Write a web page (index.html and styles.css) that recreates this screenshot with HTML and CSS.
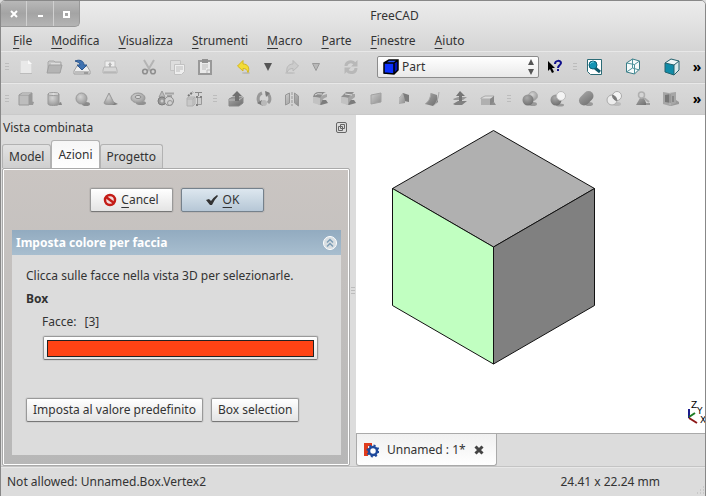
FILE: index.html
```html
<!DOCTYPE html>
<html lang="it">
<head>
<meta charset="utf-8">
<title>FreeCAD</title>
<link rel="stylesheet" href="styles.css">
</head>
<body>
<svg class="defs" aria-hidden="true">
  <defs>
    <linearGradient id="metal" x1="0" y1="0" x2="1" y2="1"><stop offset="0" stop-color="#ccc"/><stop offset="1" stop-color="#8e8e8e"/></linearGradient>
    <linearGradient id="dark" x1="0" y1="0" x2="1" y2="1"><stop offset="0" stop-color="#a8a8a8"/><stop offset="1" stop-color="#6c6c6c"/></linearGradient>
    <radialGradient id="ball" cx=".4" cy=".35" r=".7"><stop offset="0" stop-color="#d4d4d4"/><stop offset="1" stop-color="#989898"/></radialGradient>
    <radialGradient id="darkball" cx=".4" cy=".3" r=".7"><stop offset="0" stop-color="#aaa"/><stop offset="1" stop-color="#707070"/></radialGradient>
    <linearGradient id="fused" gradientUnits="userSpaceOnUse" x1="6" y1="4" x2="14" y2="16"><stop offset="0" stop-color="#a2a2a2"/><stop offset="1" stop-color="#707070"/></linearGradient>
  </defs>
</svg>
<div class="window">
  <header class="titlebar">
    <div class="controls">
      <button aria-label="Close"><svg width="10" height="10"><path d="M2 2l6 6M8 2l-6 6" stroke="#fff" stroke-width="2"/></svg></button>
      <button aria-label="Minimize"><svg width="10" height="10"><path d="M3 7h5" stroke="#fff" stroke-width="2"/></svg></button>
      <button aria-label="Maximize"><svg width="10" height="10"><path d="M3 3h5v5h-5z" fill="none" stroke="#fff" stroke-width="2"/></svg></button>
    </div>
    <h1>FreeCAD</h1>
  </header>
  <nav class="menubar">
    <a href="#"><u>F</u>ile</a><a href="#"><u>M</u>odifica</a><a href="#"><u>V</u>isualizza</a><a href="#"><u>S</u>trumenti</a><a href="#"><u>M</u>acro</a><a href="#"><u>P</u>arte</a><a href="#"><u>F</u>inestre</a><a href="#"><u>A</u>iuto</a>
  </nav>
  <div class="toolbar">
    <i class="grip"></i>
    <button disabled aria-label="New"><svg class="ico" viewBox="0 0 20 20"><path d="M4.500 3.500h8l3 3v10h-11z" fill="#e9e9e9" stroke="#dadada"/><path d="M12 3l4 4h-4z" fill="#fafafa"/><path d="M4 16.500h12" stroke="#bcbcbc"/></svg></button>
    <button disabled aria-label="Open"><svg class="ico" viewBox="0 0 20 20"><path d="M4 15V5l1-1h5l1 1h6v4" fill="#c8c8c8" stroke="#a8a8a8"/><path d="M7 6h9v3H7z" fill="#ddd"/><path d="M5 8h13l-2 8H3z" fill="#b4b4b4" stroke="#a0a0a0"/></svg></button>
    <button aria-label="Save"><svg class="ico" viewBox="0 0 20 20"><path d="M5 9h10l3 5v3H2v-3z" fill="#ededed" stroke="#a0a0a0"/><path d="M3 14h14v3H3z" fill="#bdbdbd"/><path d="M12 16h4" stroke="#777"/><path d="M3 4c5-2 9 0 9 4h3l-5 5-5-5h3c0-2-2-3-5-4z" fill="#3f72b0" stroke="#2c568d"/></svg></button>
    <button disabled aria-label="Print"><svg class="ico" viewBox="0 0 20 20"><path d="M5 4h10v7H5z" fill="#eee" stroke="#c0c0c0"/><path d="M10 5l2 3h-4zM9 8h2v3H9z" fill="#b4b4b4"/><path d="M4 10h12l1 3v3H3v-3z" fill="#d6d6d6" stroke="#b4b4b4"/><path d="M4 15h12" stroke="#aaa"/></svg></button>
    <button class="group" disabled aria-label="Cut"><svg class="ico" viewBox="0 0 20 20"><path d="M5 3l6.500 11M15 3L8.500 14" stroke="#b4b4b4" stroke-width="2" fill="none"/><circle cx="6" cy="14.500" r="2.300" fill="none" stroke="#8e8e8e" stroke-width="1.600"/><circle cx="14" cy="14.500" r="2.300" fill="none" stroke="#8e8e8e" stroke-width="1.600"/></svg></button>
    <button disabled aria-label="Copy"><svg class="ico" viewBox="0 0 20 20"><path d="M3.500 3.500h10v10h-10z" fill="#ddd" stroke="#c2c2c2"/><path d="M7.500 7.500h10v7l-3 3h-7z" fill="#eee" stroke="#c2c2c2"/><path d="M9 10h7M9 12h7M9 14h4" stroke="#bcbcbc"/></svg></button>
    <button disabled aria-label="Paste"><svg class="ico" viewBox="0 0 20 20"><path d="M4 4h12v13H4z" fill="#eaeaea" stroke="#999" stroke-width="2"/><path d="M7 2h6v4H7z" fill="#909090"/><path d="M7 8h6M7 10h6M7 12h4" stroke="#bcbcbc"/><path d="M12 16v-3h3" fill="none" stroke="#bbb"/></svg></button>
    <button class="group" aria-label="Undo"><svg class="ico" viewBox="0 0 20 20"><ellipse cx="12" cy="16" rx="4" ry="1" fill="#bbb"/><path d="M3.500 9L9 3.500V7c5 0 7 4 5 8.500-1-3-2-4-5-4V14z" fill="#f3dc35" stroke="#d4b61c"/></svg></button>
    <button class="drop" aria-label="Undo list"><svg width="8" height="8"><path d="M0 0h8l-4 8z" fill="#555"/></svg></button>
    <button disabled aria-label="Redo"><svg class="ico" viewBox="0 0 20 20"><ellipse cx="8" cy="16" rx="5" ry="1" fill="#c2c2c2"/><path d="M16.500 9L11 3.500V7c-5 0-7 4-6 8.500 1-3 3-4 6-4V14z" fill="#ccc" stroke="#b8b8b8"/></svg></button>
    <button class="drop" disabled aria-label="Redo list"><svg width="8" height="8"><path d="M.5.500h7L4 7.500z" fill="#b8b8b8" stroke="#999"/></svg></button>
    <button class="group" disabled aria-label="Refresh"><svg class="ico" viewBox="0 0 20 20"><g fill="none" stroke="#b8b8b8" stroke-width="3"><path d="M5 9c0-4 6-6 9-2"/><path d="M15 11c0 5-6 6-9 2.500"/></g><path d="M16.500 3v6.500H10zM3.500 17v-6.500H10z" fill="#b8b8b8"/></svg></button>
    <div class="workbench">
      <svg class="wb-icon" viewBox="0 0 16 16"><path d="M1 4l5-3h9l-4 3z" fill="#2554ff"/><path d="M1 4h10v11H1z" fill="#0b30ff"/><path d="M11 4l4-3v10l-4 4z" fill="#0014b8"/><path d="M1 4l5-3h9v10l-4 4-10-1zM1 4h10l4-3M11 4v11" fill="none" stroke="#000" stroke-width="1.500"/></svg>
      <select aria-label="Workbench"><option>Part</option></select>
      <svg class="wb-arrows" width="6" height="16"><path d="M0 6l3-6 3 6zM0 10h6l-3 6z" fill="#555"/></svg>
    </div>
    <button aria-label="What's this?"><svg class="ico" viewBox="0 0 20 20"><path d="M3 4v10l2-2 2 4 2-1-2-4h3z" fill="#000"/><path d="M10 7c0-4 6-4 6-1 0 2-3 2-3 5" fill="none" stroke="#10108c" stroke-width="2"/><path d="M12 12h2v2h-2z" fill="#10108c"/></svg></button>
    <i class="grip"></i>
    <button aria-label="Fit all"><svg class="ico" viewBox="0 0 20 20"><path d="M3.500 2.500h14v15h-11l-3-3z" fill="#fff" stroke="#2b6b76"/><path d="M11 11l5 4" stroke="#11586a" stroke-width="3"/><circle cx="9" cy="8" r="4" fill="#1594b4" stroke="#0d5f74"/><path d="M6 7c1-2 3-2 4-2" stroke="#6cd0e2" fill="none"/></svg></button>
    <button class="group" aria-label="Axonometric view"><svg class="ico" viewBox="0 0 20 20"><path d="M3.500 6l6-4 7 2v8l-5 5-8-2z" fill="#f5fafa" stroke="#3a7c86"/><path d="M3.500 6l8 1.500 5-3.500M11.500 7.500V17M9.500 2v9l-6 4M9.500 11l7 2" fill="none" stroke="#4c929b"/></svg></button>
    <button class="group" aria-label="Front view"><svg class="ico" viewBox="0 0 20 20"><path d="M3 6l6-4 8 2-5 4z" fill="#eef6f6"/><path d="M3 6l9 2v10l-9-3z" fill="#108ca8"/><path d="M12 8l5-4v9l-5 5z" fill="#d9e9ea"/><path d="M3 6l6-4 8 2v9l-5 5-9-3zM3 6l9 2 5-4M12 8v10" fill="none" stroke="#24616c"/></svg></button>
    <button class="more" aria-label="More">»</button>
  </div>
  <div class="toolbar">
    <i class="grip"></i>
    <button disabled aria-label="Box"><svg class="ico" viewBox="0 0 20 20"><path d="M8 16h9l1-3-4-1z" fill="#999"/><path d="M3 6l3-2h10l-2 3z" fill="#ddd"/><path d="M3 6h10v10H3z" fill="#bdbdbd"/><path d="M13 6l3-2v9l-3 3z" fill="#999"/><path d="M3 6l3-2h10v9l-3 3H3zM3 6h10v10M13 6l3-2" fill="none" stroke="#999"/></svg></button>
    <button disabled aria-label="Cylinder"><svg class="ico" viewBox="0 0 20 20"><path d="M10 16h8l-1-3z" fill="#888"/><path d="M4 5v10c0 2 11 2 11 0V5z" fill="url(#ball)" stroke="#999"/><ellipse cx="9.500" cy="5" rx="5.500" ry="1.500" fill="#ddd" stroke="#999"/></svg></button>
    <button disabled aria-label="Sphere"><svg class="ico" viewBox="0 0 20 20"><ellipse cx="14" cy="15" rx="4" ry="2" fill="#8a8a8a"/><circle cx="9.500" cy="9.500" r="5.500" fill="url(#ball)" stroke="#9a9a9a"/></svg></button>
    <button disabled aria-label="Cone"><svg class="ico" viewBox="0 0 20 20"><path d="M12 12l6 3-3 1H9z" fill="#808080"/><path d="M9 4l5 10c0 2-10 2-10 0z" fill="url(#ball)" stroke="#999"/></svg></button>
    <button disabled aria-label="Torus"><svg class="ico" viewBox="0 0 20 20"><ellipse cx="13" cy="14" rx="5" ry="2" fill="#909090"/><ellipse cx="10" cy="9" rx="7" ry="5" fill="url(#ball)" stroke="#999"/><ellipse cx="10" cy="8" rx="3" ry="1.500" fill="#ddd" stroke="#888"/></svg></button>
    <button disabled aria-label="Primitives"><svg class="ico" viewBox="0 0 20 20"><path d="M6 2l3 6H3z" fill="#bbb" stroke="#999"/><path d="M9 4.500h9M11 7h5" stroke="#a4a4a4" stroke-width="2"/><circle cx="6" cy="12" r="4" fill="#999" stroke="#7c7c7c"/><circle cx="6" cy="12" r="1.500" fill="#ccc"/><circle cx="13" cy="12" r="4.500" fill="#d0d0d0" stroke="#8c8c8c"/><circle cx="14" cy="14" r="2.500" fill="none" stroke="#999"/></svg></button>
    <button disabled aria-label="Shape builder"><svg class="ico" viewBox="0 0 20 20"><path d="M4 7l5-4" stroke="#777" stroke-width="2" stroke-dasharray="2 1"/><path d="M11 3.500h7M14.500 3v4" stroke="#888"/><path d="M3 9l2-1h6v7l-2 2H3zM3 10h6v7M9 10l2-2" fill="#c8c8c8" stroke="#b0b0b0"/><path d="M13.500 8.500h4v7h-4z" fill="#ccc" stroke="#999"/><path d="M12 7h2v2h-2zM16 7h2v2h-2zM12 15h2v2h-2z" fill="#808080"/></svg></button>
    <i class="grip wide"></i>
    <button disabled aria-label="Extrude"><svg class="ico" viewBox="0 0 20 20"><path d="M3 10l4-2h10v6l-4 3H3z" fill="url(#dark)" stroke="#888"/><path d="M3 11h10l4-3" stroke="#bbb" fill="none"/><path d="M9 12V7H6l5-5 5 5h-3v5z" fill="#707070"/></svg></button>
    <button disabled aria-label="Revolve"><svg class="ico" viewBox="0 0 20 20"><path d="M8 4a6 6 0 0 0-2 10M12 4a6 6 0 0 1 2 10" fill="none" stroke="#999" stroke-width="3"/><path d="M11 2l5 2-4 4zM9 17l-6-3 5-3z" fill="#7a7a7a"/><circle cx="10" cy="14" r="3" fill="#b9b9b9"/></svg></button>
    <button disabled aria-label="Mirror"><svg class="ico" viewBox="0 0 20 20"><path d="M3.500 6l4-2v10l-4 2zM12.500 4l4 3v10l-4-3z" fill="url(#metal)" stroke="#969696"/><path d="M10 3v14" stroke="#999" stroke-dasharray="3 1"/></svg></button>
    <button disabled aria-label="Fillet"><svg class="ico" viewBox="0 0 20 20"><path d="M10 11h6l2 3-7 2-3-1z" fill="#7c7c7c"/><path d="M3 8q1-5 6-5h7q-4 1-5 6z" fill="#8c8c8c"/><path d="M3 8l7 1v7l-7-2z" fill="#c2c2c2"/><path d="M10 9q1-3 7-4v3q-4 1-5 4l-2 4z" fill="#a4a4a4"/><path d="M5 6q2-2 7-1" stroke="#ddd" fill="none"/></svg></button>
    <button disabled aria-label="Chamfer"><svg class="ico" viewBox="0 0 20 20"><path d="M10 11h6l2 3-7 2-3-1z" fill="#7c7c7c"/><path d="M3 8l5-5h8l-5 6z" fill="#8f8f8f"/><path d="M3 8l7 1v7l-7-2z" fill="#c2c2c2"/><path d="M10 9l4-4h3v3l-5 4-2 4z" fill="#a4a4a4"/><path d="M7 5l7 1" stroke="#ddd"/></svg></button>
    <button disabled aria-label="Make face"><svg class="ico" viewBox="0 0 20 20"><path d="M5 6l10-2v9L5 15z" fill="url(#metal)" stroke="#a2a2a2"/></svg></button>
    <button disabled aria-label="Ruled surface"><svg class="ico" viewBox="0 0 20 20"><path d="M9 4l6 2v7l-5-1-5 3V9z" fill="#7c7c7c"/><path d="M5 9l4-5 2 7v3l-6 1z" fill="url(#metal)"/></svg></button>
    <button disabled aria-label="Loft"><svg class="ico" viewBox="0 0 20 20"><path d="M9 4l6 2 1 7-5 4-8-2q5-3 6-11z" fill="url(#dark)"/><path d="M3 15q5-3 6-11M11 17q5-3 6-14" stroke="#aaa" fill="none"/></svg></button>
    <button disabled aria-label="Offset"><svg class="ico" viewBox="0 0 20 20"><path d="M3 15l5-3h9l-5 4H5z" fill="#808080"/><path d="M3 10l5-2h9l-4 3H4z" fill="#999"/><path d="M9 12V7H6l4-5 5 5h-3v5z" fill="#757575"/></svg></button>
    <button disabled aria-label="Thickness"><svg class="ico" viewBox="0 0 20 20"><path d="M9 16h9l-2-3z" fill="#909090"/><path d="M3 9l4-2h9l-2 3H3z" fill="#ddd" stroke="#aaa"/><path d="M3 10h9v6H3z" fill="#b0b0b0"/><path d="M12 10l4-3v6l-4 3z" fill="#888"/></svg></button>
    <i class="grip wide"></i>
    <button disabled aria-label="Boolean"><svg class="ico" viewBox="0 0 20 20"><ellipse cx="13" cy="15" rx="4" ry="2" fill="#999"/><circle cx="13" cy="7" r="4.500" fill="url(#ball)" stroke="#aaa"/><circle cx="8" cy="11" r="5.500" fill="url(#darkball)"/></svg></button>
    <button disabled aria-label="Cut shapes"><svg class="ico" viewBox="0 0 20 20"><ellipse cx="12" cy="16" rx="4" ry="1.500" fill="#999"/><circle cx="8" cy="11" r="5.500" fill="url(#darkball)"/><circle cx="13" cy="7" r="4.500" fill="#f4f4f4" stroke="#bbb"/></svg></button>
    <button disabled aria-label="Union"><svg class="ico" viewBox="0 0 20 20"><ellipse cx="13" cy="15" rx="4" ry="2" fill="#999"/><path d="M8 11.500L12.500 7" stroke="url(#fused)" stroke-width="10" stroke-linecap="round"/></svg></button>
    <button disabled aria-label="Intersection"><svg class="ico" viewBox="0 0 20 20"><ellipse cx="13" cy="15" rx="4" ry="2" fill="#bbb"/><circle cx="8" cy="11" r="5" fill="#ededed" stroke="#aaa"/><circle cx="13" cy="7" r="4.500" fill="#f4f4f4" stroke="#aaa"/><path d="M8.500 6q4 1 4.500 5.500-4-.500-4.500-5.500z" fill="#777" stroke="#808080"/></svg></button>
    <button disabled aria-label="Check geometry"><svg class="ico" viewBox="0 0 20 20"><path d="M8 9h4l3 7H4z" fill="url(#dark)"/><path d="M12 9l5 4" stroke="#aaa" stroke-width="2"/><path d="M14 15h4" stroke="#999" stroke-width="2"/><circle cx="9.500" cy="6" r="3" fill="#d4d4d4" stroke="#b0b0b0" stroke-width="1.500"/></svg></button>
    <button disabled aria-label="Section"><svg class="ico" viewBox="0 0 20 20"><path d="M8 15l8-4 3 2v2l-8 2z" fill="#999"/><path d="M3 3l6 1 7-1v11l-6 3-7-2z" fill="#a6a6a6"/><path d="M5 6l6-1v9l-6-1z" fill="#777"/><path d="M10 4v12" stroke="#bbb"/><path d="M12 7h2v6h-2z" fill="#888"/></svg></button>
    <button class="more" aria-label="More">»</button>
  </div>

  <main class="workspace">
    <aside class="dock">
      <div class="dock-title"><h2>Vista combinata</h2>
        <button aria-label="Float panel"><svg width="11" height="11"><rect x=".5" y=".5" width="10" height="10" rx="1.500" fill="none" stroke="#666"/><path d="M4.500 2.500h4v4h-4zM2.500 4.500h4v4h-4z" fill="none" stroke="#666"/></svg></button></div>
      <div class="tabs" role="tablist">
        <button role="tab">Model</button><button role="tab" class="active" aria-selected="true">Azioni</button><button role="tab">Progetto</button>
      </div>
      <div class="pane">
        <div class="actions">
          <button class="btn"><svg width="14" height="14"><circle cx="7" cy="7" r="5" fill="#f3dcdc" stroke="#c41c17" stroke-width="2.500"/><path d="M3 4l8 6" stroke="#c41c17" stroke-width="2.500"/></svg><span><u>C</u>ancel</span></button>
          <button class="btn default"><svg width="14" height="14"><path d="M1 7l3-1 2 2q3-4 6-6l1 1q-4 4-6 9H5z" fill="#333"/></svg><span><u>O</u>K</span></button>
        </div>
        <section class="task">
          <h3><span>Imposta colore per faccia</span>
            <button aria-label="Collapse"><svg width="16" height="16"><circle cx="8" cy="8" r="6.500" fill="#d8dee2" stroke="#fff"/><path d="M5 7.500l3-3 3 3M5 11.500l3-3 3 3" fill="none" stroke="#7d9db6" stroke-width="1.500"/></svg></button></h3>
          <div class="task-body">
            <p>Clicca sulle facce nella vista 3D per selezionarle.</p>
            <p class="strong">Box</p>
            <p class="faces"><span>Facce:</span><span>[3]</span></p>
            <button class="btn color" aria-label="Colore"><i></i></button>
            <div class="choices"><button class="btn">Imposta al valore predefinito</button><button class="btn">Box selection</button></div>
          </div>
        </section>
      </div>
    </aside>
    <div class="splitter"><i class="grip"></i></div>
    <section class="document">
      <div class="view">
        <svg class="cube" viewBox="0 0 349 318" role="img" aria-label="Box">
          <g stroke="#111" stroke-linejoin="round"><path d="M137.500 15.500l101 58-101 58.500-101-58.500z" fill="#b0b0b0"/><path d="M36.500 73.500l101 58.500v117L36.500 190.500z" fill="#c1ffc1"/><path d="M137.500 132l101-58.500v117l-101 58.500z" fill="#808080"/></g>
        </svg>
        <svg class="axes" viewBox="0 0 20 28"><path d="M4 18V9" stroke="#1c1c8c" stroke-width="2"/><path d="M4 17l6-4" stroke="#1b7a20" stroke-width="2"/><path d="M4 18l8 5" stroke="#8c1616" stroke-width="2"/><text x="6" y="8">Z</text><text x="12" y="14">Y</text><text x="15" y="23">X</text></svg>
      </div>
      <div class="doc-tabs">
        <div class="doc-tab"><svg width="16" height="16"><path d="M1 1h8v3H5v2h4v3H5v5H1z" fill="#e03c1c"/><circle cx="10" cy="9" r="4" fill="#fff" stroke="#1f4a9c" stroke-width="2.500"/><circle cx="10" cy="9" r="5.500" fill="none" stroke="#1f4a9c" stroke-width="2" stroke-dasharray="2 2.300"/></svg><span>Unnamed : 1*</span>
        <button aria-label="Close document"><svg width="10" height="10"><path d="M1.500 1.500l7 7M8.500 1.500l-7 7" stroke="#444" stroke-width="3"/></svg></button></div>
      </div>
    </section>
  </main>
  <footer class="status"><span>Not allowed: Unnamed.Box.Vertex2</span><span class="size">24.41 x 22.24 mm</span>
    <svg class="resize" width="10" height="10"><path d="M8 1h1M5 4h1M8 4h1M2 7h1M5 7h1M8 7h1" stroke="#b4b4b4"/></svg></footer>
</div>
</body>
</html>
```
FILE: styles.css
```css
* { box-sizing: border-box; }
body {
  margin: 0;
  background: #dcdcdc;
  color: #333;
  font: 12px/16px "Noto Sans", sans-serif;
}
h1, h2, h3, p { margin: 0; font-size: 12px; font-weight: normal; }
button { margin: 0; padding: 0; border: 0; background: none; color: inherit; font: inherit; }
a { color: inherit; text-decoration: none; }
u { text-underline-offset: 3px; }
svg { display: block; flex: none; }
.defs { position: absolute; width: 0; height: 0; }

.window {
  display: flex;
  flex-direction: column;
  min-height: 100vh;
  border: 1px solid #888;
  border-radius: 5px 5px 0 0;
  background: #dcdcdc;
  overflow: hidden;
}

.titlebar {
  display: flex;
  height: 29px;
  background: linear-gradient(#ececec, #dfdfdf);
}
.titlebar h1 { flex: 1; padding: 7px 0 0 4px; text-align: center; }
.controls {
  display: flex;
  width: 79px;
  height: 26px;
  border: solid #999;
  border-width: 0 1px 1px 0;
  border-radius: 0 0 5px 0;
  background: linear-gradient(#b8b8b8, #a4a4a4 50%, #b4b4b4);
}
.controls button { flex: 1; display: grid; place-items: center; border-left: 1px solid #d0d0d0; }
.controls button:first-child { border-left: 0; }

.menubar {
  display: flex;
  gap: 19px;
  height: 21px;
  padding: 3px 12px;
  background: linear-gradient(#dfdfdf, #d4d4d4);
}

.toolbar {
  display: flex;
  align-items: center;
  height: 32px;
  border-top: 1px solid #e8e8e8;
  border-bottom: 1px solid #cacaca;
  background: linear-gradient(#d9d9d9, #d0d0d0);
}
.toolbar button { display: grid; place-items: center; flex: none; width: 28px; height: 28px; }
.toolbar .group { margin-left: 11px; }
.toolbar .drop { width: 20px; }
.toolbar .more {
  width: 16px;
  margin-left: auto;
  color: #000;
  font-size: 14px;
  font-weight: bold;
}
.ico { width: 20px; height: 20px; }
.grip {
  flex: none;
  width: 4px;
  height: 8px;
  margin: 0 3px 0 4px;
  background: repeating-linear-gradient(#bcbcbc 0 1px, transparent 1px 3px);
}
.grip.wide { margin: 0 5px; }

.workbench { position: relative; flex: none; width: 162px; height: 22px; margin: 0 2px 0 12px; }
.workbench select {
  width: 100%;
  height: 100%;
  padding: 0 24px;
  appearance: none;
  border: 1px solid #8c8c8c;
  border-radius: 2px;
  background: linear-gradient(#fff, #e9e9e9);
  color: inherit;
  font: inherit;
}
.wb-icon { position: absolute; top: 3px; left: 6px; width: 16px; height: 16px; }
.wb-arrows { position: absolute; top: 3px; right: 5px; }

.workspace { display: flex; flex: 1; }
.dock { display: flex; flex-direction: column; flex: 0 0 349px; padding: 0 0 0 1px; }
.dock-title { display: flex; align-items: center; justify-content: space-between; height: 25px; padding: 0 3px 0 1px; }
.tabs { display: flex; align-items: flex-end; height: 28px; }
.tabs button {
  height: 24px;
  padding: 0 6px;
  border: 1px solid #b2b2b2;
  border-bottom: 0;
  border-radius: 3px 3px 0 0;
  background: linear-gradient(#e2e2e2, #cfcfcf);
}
.tabs .active { height: 28px; background: linear-gradient(#f6f6f6, #fff); }
.pane {
  flex: 1;
  padding: 19px 8px 8px 9px;
  border: 1px solid #aaa;
  border-radius: 2px;
  box-shadow: inset 0 0 0 1px #fff;
  background: linear-gradient(#cac5c2, #b7b7b7);
}
.actions { display: flex; justify-content: center; gap: 8px; }
.btn {
  display: flex;
  align-items: center;
  justify-content: center;
  gap: 4px;
  height: 24px;
  padding: 0 6px;
  border: 1px solid #999;
  border-bottom-color: #777;
  border-radius: 2px;
  background: linear-gradient(#fff, #e4e4e4);
  box-shadow: 0 0 0 1px rgba(0, 0, 0, .06);
}
.actions .btn { width: 83px; }
.btn.default { border-color: #75818c; background: linear-gradient(#dde7ef, #b6c7d6); }

.task { margin-top: 18px; background: #dcdcdc; }
.task h3 {
  display: flex;
  align-items: center;
  justify-content: space-between;
  height: 25px;
  padding: 0 3px 0 4px;
  background: linear-gradient(#92abc0, #a8becf);
  color: #fff;
  font-weight: bold;
}
.task-body { padding: 13px 14px 33px; }
.task-body p { margin-bottom: 7px; }
.strong { font-weight: bold; }
.faces { display: flex; gap: 8px; padding-left: 16px; }
.btn.color { width: calc(100% - 26px); margin: -1px 0 38px 17px; padding: 3px; }
.color i { flex: 1; height: 17px; border: 1px solid #222; background: #ff4314; }
.choices { display: flex; gap: 8px; }

.splitter { display: grid; place-items: center; width: 6px; }
.splitter .grip { margin: 0; }
.document { display: flex; flex-direction: column; flex: 1; }
.view { position: relative; flex: 1; background: #fff; }
.cube { width: 100%; }
.axes { position: absolute; right: 0; bottom: 5px; width: 20px; height: 28px; fill: #000; font: 9px "DejaVu Sans", sans-serif; }
.doc-tabs { height: 33px; border-top: 1px solid #aaa; }
.doc-tab {
  display: inline-flex;
  align-items: center;
  gap: 8px;
  height: 32px;
  padding: 0 12px 0 6px;
  border: 1px solid #aaa;
  border-top: 0;
  border-radius: 0 0 3px 3px;
  background: linear-gradient(#f0f0f0, #fff);
}

.status {
  display: flex;
  align-items: center;
  height: 30px;
  padding-left: 6px;
  border-top: 1px solid #c4c4c4;
  box-shadow: inset 0 1px #e8e8e8;
}
.size { margin-left: auto; margin-right: 35px; }
.resize { align-self: flex-end; }
```
